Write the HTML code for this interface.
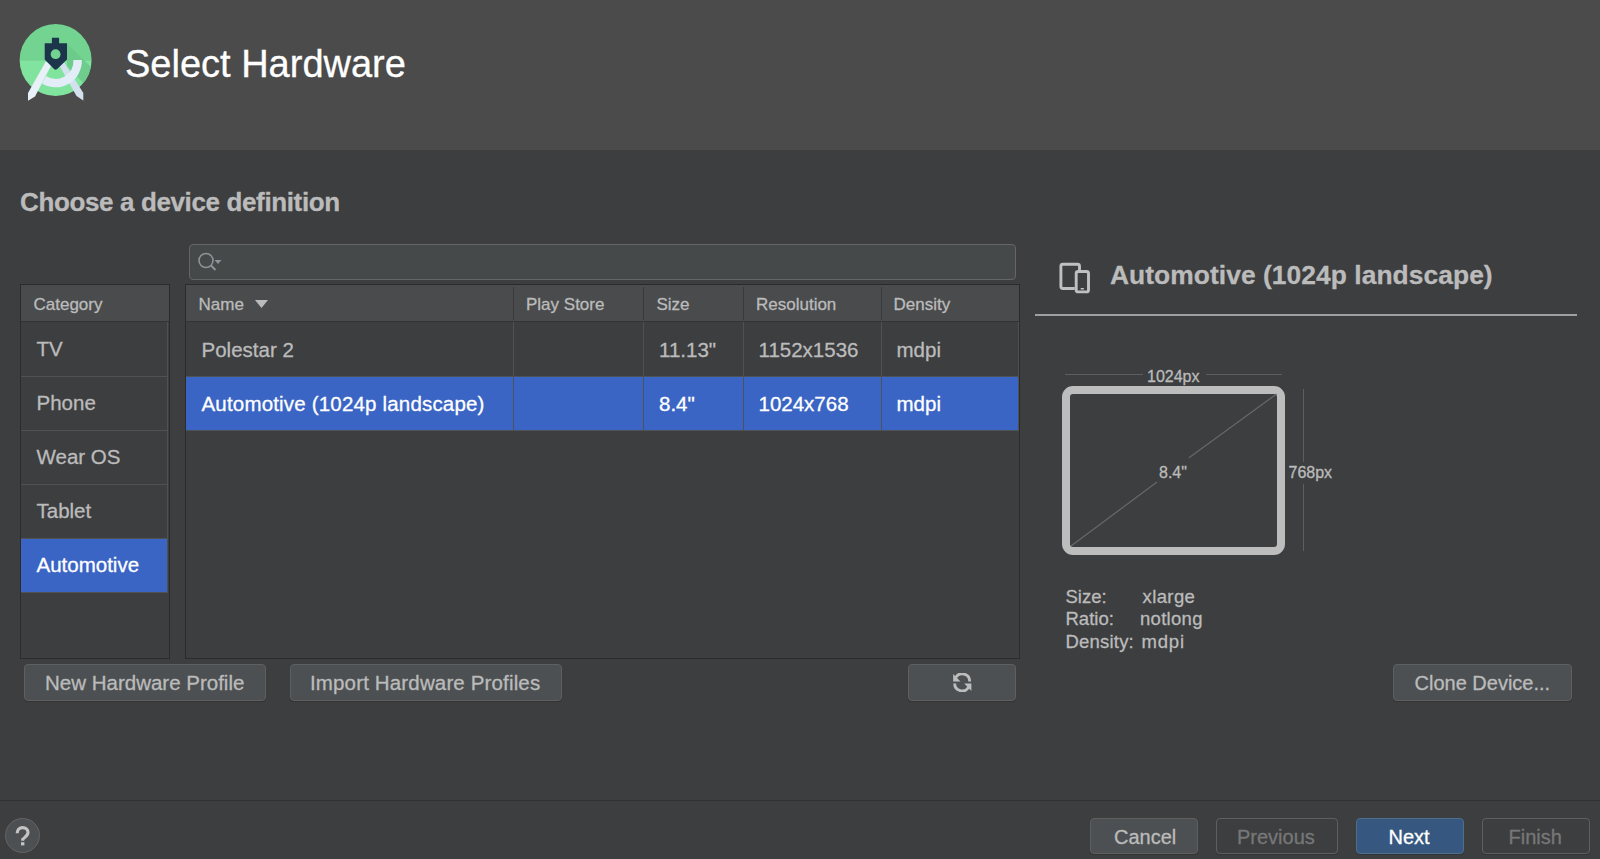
<!DOCTYPE html>
<html><head><meta charset="utf-8">
<style>
html,body{margin:0;padding:0;}
body{width:1600px;height:859px;overflow:hidden;position:relative;background:#3d3e40;font-family:"Liberation Sans",sans-serif;color:#bbbbbb;}
.a{position:absolute;}
.t{position:absolute;white-space:nowrap;line-height:1;-webkit-text-stroke:0.3px currentColor;}
#hdr{left:0;top:0;width:1600px;height:150px;background:#4b4b4b;}
.tbl{position:absolute;background:#3d3e40;box-sizing:border-box;border:1px solid #2b2b2b;}
.th{position:absolute;background:#494b4d;}
.hl{position:absolute;height:1px;background:#4f5254;}
.vl{position:absolute;width:1px;background:#4f5254;}
.btn{position:absolute;box-sizing:border-box;border:1px solid #5e6060;background:#4c5052;border-radius:4px;box-shadow:0 1px 1px rgba(0,0,0,0.18);}
.sel{position:absolute;background:#3a65c4;}
.w{color:#ffffff;}
</style></head><body>
<div id="hdr" class="a"></div>
<!-- logo -->
<svg class="a" style="left:0;top:0" width="120" height="120" viewBox="0 0 120 120">
  <defs><clipPath id="cc"><circle cx="55.6" cy="60.1" r="36"/></clipPath></defs>
  <g clip-path="url(#cc)">
    <rect x="15" y="20" width="82" height="40.1" fill="#73d491"/>
    <rect x="15" y="60.1" width="82" height="40" fill="#80e39e"/>
    <polygon points="67,43.5 100,76 100,100 67,66" fill="#6cc98a" opacity="0.9"/>
  </g>
  <polygon points="45.5,62 52.5,63 35,96.5 28,100.7 28,93" fill="#e8f0f8"/>
  <polygon points="58.5,64 64,62 83.3,93 83.3,100.5 76.5,96" fill="#d3e0ee"/>
  <path d="M81.8 60.1 A26.2 26.2 0 0 1 42 83.5 L46 76 A17.8 17.8 0 0 0 73.4 60.1 Z" fill="#e2edf8"/>
  <path d="M51.9 37.8 H59.1 V43.3 H67 V59.6 L57.2 69 Q55.6 70.3 54 69 L44.7 59.6 V43.3 H51.9 Z" fill="#1d354a"/>
  <circle cx="55.6" cy="54.2" r="4.9" fill="#73d491"/>
</svg>
<div class="t" style="left:125px;top:45.3px;font-size:38px;color:#ffffff;">Select Hardware</div>

<div class="t" style="left:20px;top:189.3px;font-size:26px;font-weight:bold;letter-spacing:-0.37px;">Choose a device definition</div>

<!-- search -->
<div class="a" style="left:189px;top:243.5px;width:827px;height:36px;box-sizing:border-box;border:1.5px solid #646668;border-radius:4px;background:#45494a;"></div>
<svg class="a" style="left:195px;top:250px" width="30" height="24" viewBox="0 0 30 24">
  <circle cx="11" cy="10.5" r="7" fill="none" stroke="#8c9499" stroke-width="1.6"/>
  <line x1="16" y1="15.5" x2="20.5" y2="20" stroke="#8c9499" stroke-width="2"/>
  <polygon points="19.5,10 26.5,10 23,14" fill="#8c9499"/>
</svg>

<!-- category table -->
<div class="tbl" style="left:20px;top:284px;width:150px;height:375px;"></div>
<div class="th" style="left:21px;top:285px;width:148px;height:36px;"></div>
<div class="a" style="left:21px;top:321px;width:148px;height:1px;background:#323334;"></div>
<div class="hl" style="left:21px;top:376px;width:147px;"></div>
<div class="hl" style="left:21px;top:430px;width:147px;"></div>
<div class="hl" style="left:21px;top:484px;width:147px;"></div>
<div class="hl" style="left:21px;top:538px;width:147px;"></div>
<div class="sel" style="left:21px;top:539px;width:147px;height:53px;"></div>
<div class="vl" style="left:167px;top:322px;height:271px;"></div>
<div class="hl" style="left:21px;top:592px;width:147px;"></div>
<div class="t" style="left:33.5px;top:295.9px;font-size:17px;">Category</div>
<div class="t" style="left:36.5px;top:339.1px;font-size:20.5px;">TV</div>
<div class="t" style="left:36.5px;top:393.1px;font-size:20.5px;">Phone</div>
<div class="t" style="left:36.5px;top:447.1px;font-size:20.5px;">Wear OS</div>
<div class="t" style="left:36.5px;top:501.1px;font-size:20.5px;">Tablet</div>
<div class="t w" style="left:36.5px;top:555.1px;font-size:20.5px;">Automotive</div>

<!-- device table -->
<div class="tbl" style="left:185px;top:284px;width:835px;height:375px;"></div>
<div class="th" style="left:186px;top:285px;width:833px;height:36px;"></div>
<div class="a" style="left:186px;top:321px;width:833px;height:1px;background:#323334;"></div>
<div class="a" style="left:513px;top:287px;width:1px;height:33px;background:#38393a;"></div>
<div class="a" style="left:643px;top:287px;width:1px;height:33px;background:#38393a;"></div>
<div class="a" style="left:743px;top:287px;width:1px;height:33px;background:#38393a;"></div>
<div class="a" style="left:881px;top:287px;width:1px;height:33px;background:#38393a;"></div>
<div class="hl" style="left:186px;top:376px;width:833px;"></div>
<div class="sel" style="left:186px;top:377px;width:833px;height:53px;"></div>
<div class="hl" style="left:186px;top:430px;width:833px;"></div>
<div class="vl" style="left:513px;top:322px;height:108px;"></div>
<div class="vl" style="left:643px;top:322px;height:108px;"></div>
<div class="vl" style="left:743px;top:322px;height:108px;"></div>
<div class="vl" style="left:881px;top:322px;height:108px;"></div>
<div class="vl" style="left:1018px;top:322px;height:108px;"></div>
<div class="t" style="left:198.5px;top:296.1px;font-size:17px;">Name</div>
<svg class="a" style="left:254px;top:299px" width="15" height="10"><polygon points="1,1 14,1 7.5,9" fill="#bbbbbb"/></svg>
<div class="t" style="left:526px;top:296.1px;font-size:17px;">Play Store</div>
<div class="t" style="left:656.5px;top:296.1px;font-size:17px;">Size</div>
<div class="t" style="left:756px;top:296.1px;font-size:17px;">Resolution</div>
<div class="t" style="left:893.5px;top:296.1px;font-size:17px;">Density</div>

<div class="t" style="left:201.5px;top:339.6px;font-size:20.5px;">Polestar 2</div>
<div class="t" style="left:659px;top:339.6px;font-size:20.5px;">11.13"</div>
<div class="t" style="left:758.5px;top:339.6px;font-size:20.5px;">1152x1536</div>
<div class="t" style="left:896.5px;top:339.6px;font-size:20.5px;">mdpi</div>
<div class="t w" style="left:201.5px;top:393.6px;font-size:20.5px;letter-spacing:0.18px;">Automotive (1024p landscape)</div>
<div class="t w" style="left:659px;top:393.6px;font-size:20.5px;">8.4"</div>
<div class="t w" style="left:758.5px;top:393.6px;font-size:20.5px;">1024x768</div>
<div class="t w" style="left:896.5px;top:393.6px;font-size:20.5px;">mdpi</div>

<!-- buttons under tables -->
<div class="btn" style="left:24px;top:664px;width:242px;height:37px;"></div>
<div class="t" style="left:45px;top:673.1px;font-size:20.5px;">New Hardware Profile</div>
<div class="btn" style="left:290px;top:664px;width:272px;height:37px;"></div>
<div class="t" style="left:310px;top:673.1px;font-size:20.5px;letter-spacing:0.15px;">Import Hardware Profiles</div>
<div class="btn" style="left:908px;top:664px;width:108px;height:37px;"></div>
<svg class="a" style="left:952.8px;top:672.9px" width="19" height="19" viewBox="0 0 19 19">
  <path d="M16.7 8.4 A7.5 7.5 0 0 0 2.70 4.65" fill="none" stroke="#bdbdbd" stroke-width="2.9"/>
  <polygon points="0.2,0.9 0.2,8.4 7.4,8.4" fill="#bdbdbd"/>
  <path d="M1.7 10.4 A7.5 7.5 0 0 0 15.70 14.15" fill="none" stroke="#bdbdbd" stroke-width="2.9"/>
  <polygon points="18.4,18 18.4,10.4 11.2,10.4" fill="#bdbdbd"/>
</svg>

<!-- right panel -->
<svg class="a" style="left:1058px;top:261px" width="34" height="34" viewBox="0 0 34 34">
  <path d="M16.8 27.5 H4.9 Q2.9 27.5 2.9 25.5 V5.2 Q2.9 3.2 4.9 3.2 H19.5 Q21.5 3.2 21.5 5.2 V9" fill="none" stroke="#c0c0c0" stroke-width="2.9"/>
  <rect x="18.2" y="10.5" width="12.3" height="20.4" rx="2" fill="none" stroke="#c0c0c0" stroke-width="2.9"/>
  <rect x="22.6" y="27" width="3.4" height="1.4" rx="0.5" fill="#c0c0c0"/>
</svg>
<div class="t" style="left:1110px;top:262.1px;font-size:26.4px;font-weight:bold;letter-spacing:0.05px;">Automotive (1024p landscape)</div>
<div class="a" style="left:1035px;top:314px;width:542px;height:2px;background:#a0a0a0;"></div>

<!-- diagram -->
<div class="a" style="left:1065px;top:374px;width:78px;height:1px;background:#5c5e60;"></div>
<div class="a" style="left:1206px;top:374px;width:76px;height:1px;background:#5c5e60;"></div>
<div class="t" style="left:1147px;top:369.0px;font-size:16px;">1024px</div>
<div class="a" style="left:1062px;top:385.5px;width:223px;height:169px;box-sizing:border-box;border:8px solid #bdbdbd;border-radius:11px;"></div>
<svg class="a" style="left:1062px;top:385px" width="225" height="170" viewBox="0 0 225 170">
  <line x1="214.5" y1="9" x2="127" y2="72.8" stroke="#666869" stroke-width="1.2"/>
  <line x1="95" y1="97" x2="9" y2="161" stroke="#666869" stroke-width="1.2"/>
</svg>
<div class="t" style="left:1159px;top:465.0px;font-size:16px;">8.4"</div>
<div class="a" style="left:1303px;top:389px;width:1px;height:73px;background:#5c5e60;"></div>
<div class="a" style="left:1303px;top:484px;width:1px;height:67px;background:#5c5e60;"></div>
<div class="t" style="left:1288.5px;top:465.0px;font-size:16px;">768px</div>

<div class="t" style="left:1065.5px;top:587.8px;font-size:18.5px;">Size:</div>
<div class="t" style="left:1142.5px;top:587.8px;font-size:18.5px;letter-spacing:0.4px;">xlarge</div>
<div class="t" style="left:1065.5px;top:610.3px;font-size:18.5px;">Ratio:</div>
<div class="t" style="left:1140px;top:610.3px;font-size:18.5px;letter-spacing:0.3px;">notlong</div>
<div class="t" style="left:1065.5px;top:632.8px;font-size:18.5px;letter-spacing:0.2px;">Density:</div>
<div class="t" style="left:1141.5px;top:632.8px;font-size:18.5px;letter-spacing:0.8px;">mdpi</div>

<div class="btn" style="left:1393px;top:664px;width:179px;height:37px;"></div>
<div class="t" style="left:1414.5px;top:673.1px;font-size:20px;">Clone Device...</div>

<!-- bottom -->
<div class="a" style="left:0;top:800px;width:1600px;height:1px;background:#2f3133;"></div>
<div class="a" style="left:5px;top:818px;width:35px;height:35px;box-sizing:border-box;border-radius:50%;border:1.5px solid #626466;background:#4c5052;"></div>
<svg class="a" style="left:0;top:810px" width="50" height="49" viewBox="0 810 50 49">
  <path d="M17.2 833.2 C17.2 829.6 19.5 827.6 22.6 827.6 C25.7 827.6 28 829.6 28 832.5 C28 835.4 25.3 836.6 22.7 839.3 V840.8" fill="none" stroke="#c4c4c4" stroke-width="3.1"/>
  <rect x="21" y="842.2" width="3.4" height="3.2" fill="#c4c4c4"/>
</svg>

<div class="btn" style="left:1090px;top:818px;width:108px;height:36px;"></div>
<div class="t" style="left:1114px;top:826.5px;font-size:20px;">Cancel</div>
<div class="btn" style="left:1216px;top:818px;width:122px;height:36px;background:transparent;"></div>
<div class="t" style="left:1237px;top:826.5px;font-size:20px;color:#777777;">Previous</div>
<div class="btn" style="left:1356px;top:818px;width:108px;height:36px;background:#365880;border-color:#4c708c;"></div>
<div class="t" style="left:1388.5px;top:826.5px;font-size:20px;color:#ffffff;">Next</div>
<div class="btn" style="left:1482px;top:818px;width:108px;height:36px;background:transparent;"></div>
<div class="t" style="left:1508.5px;top:826.5px;font-size:20px;color:#777777;">Finish</div>
</body></html>
